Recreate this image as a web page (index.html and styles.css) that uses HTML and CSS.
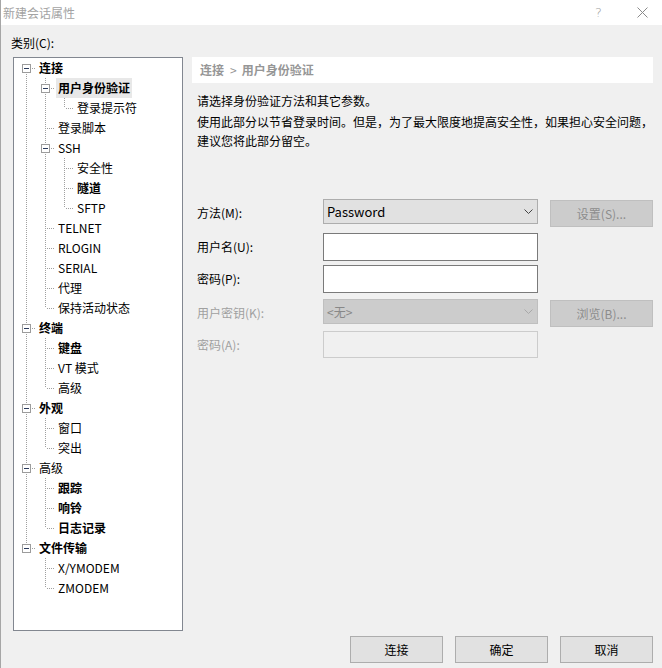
FILE: index.html
```html
<!DOCTYPE html>
<html lang="zh-CN">
<head>
<meta charset="utf-8">
<title>新建会话属性</title>
<link rel="stylesheet" href="styles.css">
</head>
<body>
<div class="window">
  <div class="titlebar">
    <span class="title">新建会话属性</span>
    <div class="caption">
      <span class="help">?</span>
      <svg class="close" width="11" height="11" viewBox="0 0 11 11"><path d="M0.5 0.5L10.5 10.5M10.5 0.5L0.5 10.5" stroke="#8a8a8a" stroke-width="1" fill="none"/></svg>
    </div>
  </div>
  <div class="main">
    <div class="cat-label">类别(C):</div>
    <div class="panes">
      <div class="tree">
        <div class="row"><i class="c bx first"><b class="box"></b></i><span class="lbl b">连接</span></div>
        <div class="row"><i class="c v"></i><i class="c bx mid"><b class="box"></b></i><span class="lbl b sel">用户身份验证</span></div>
        <div class="row"><i class="c v"></i><i class="c v"></i><i class="c l"></i><span class="lbl">登录提示符</span></div>
        <div class="row"><i class="c v"></i><i class="c t"></i><span class="lbl">登录脚本</span></div>
        <div class="row"><i class="c v"></i><i class="c bx mid"><b class="box"></b></i><span class="lbl">SSH</span></div>
        <div class="row"><i class="c v"></i><i class="c v"></i><i class="c t"></i><span class="lbl">安全性</span></div>
        <div class="row"><i class="c v"></i><i class="c v"></i><i class="c t"></i><span class="lbl b">隧道</span></div>
        <div class="row"><i class="c v"></i><i class="c v"></i><i class="c l"></i><span class="lbl">SFTP</span></div>
        <div class="row"><i class="c v"></i><i class="c t"></i><span class="lbl">TELNET</span></div>
        <div class="row"><i class="c v"></i><i class="c t"></i><span class="lbl">RLOGIN</span></div>
        <div class="row"><i class="c v"></i><i class="c t"></i><span class="lbl">SERIAL</span></div>
        <div class="row"><i class="c v"></i><i class="c t"></i><span class="lbl">代理</span></div>
        <div class="row"><i class="c v"></i><i class="c l"></i><span class="lbl">保持活动状态</span></div>
        <div class="row"><i class="c bx mid"><b class="box"></b></i><span class="lbl b">终端</span></div>
        <div class="row"><i class="c v"></i><i class="c t"></i><span class="lbl b">键盘</span></div>
        <div class="row"><i class="c v"></i><i class="c t"></i><span class="lbl">VT 模式</span></div>
        <div class="row"><i class="c v"></i><i class="c l"></i><span class="lbl">高级</span></div>
        <div class="row"><i class="c bx mid"><b class="box"></b></i><span class="lbl b">外观</span></div>
        <div class="row"><i class="c v"></i><i class="c t"></i><span class="lbl">窗口</span></div>
        <div class="row"><i class="c v"></i><i class="c l"></i><span class="lbl">突出</span></div>
        <div class="row"><i class="c bx mid"><b class="box"></b></i><span class="lbl">高级</span></div>
        <div class="row"><i class="c v"></i><i class="c t"></i><span class="lbl b">跟踪</span></div>
        <div class="row"><i class="c v"></i><i class="c t"></i><span class="lbl b">响铃</span></div>
        <div class="row"><i class="c v"></i><i class="c l"></i><span class="lbl b">日志记录</span></div>
        <div class="row"><i class="c bx last"><b class="box"></b></i><span class="lbl b">文件传输</span></div>
        <div class="row"><i class="c"></i><i class="c t"></i><span class="lbl">X/YMODEM</span></div>
        <div class="row"><i class="c"></i><i class="c l"></i><span class="lbl">ZMODEM</span></div>
      </div>
      <div class="content">
        <div class="crumb">连接<span class="sep">&gt;</span>用户身份验证</div>
        <p class="desc first">请选择身份验证方法和其它参数。</p>
        <p class="desc">使用此部分以节省登录时间。但是，为了最大限度地提高安全性，如果担心安全问题，<br>建议您将此部分留空。</p>
        <div class="form">
          <label class="flabel">方法(M):</label>
          <div class="select"><span>Password</span><svg class="chev" width="9" height="5" viewBox="0 0 9 5"><path d="M0.5 0.5L4.5 4.5L8.5 0.5" stroke="#444" fill="none"/></svg></div>
          <div class="btn dis side">设置(S)...</div>

          <label class="flabel">用户名(U):</label>
          <div class="input"></div>
          <div></div>

          <label class="flabel">密码(P):</label>
          <div class="input"></div>
          <div></div>

          <label class="flabel dis-text">用户密钥(K):</label>
          <div class="select dis"><span>&lt;无&gt;</span><svg class="chev" width="9" height="5" viewBox="0 0 9 5"><path d="M0.5 0.5L4.5 4.5L8.5 0.5" stroke="#a8a8a8" fill="none"/></svg></div>
          <div class="btn dis side">浏览(B)...</div>

          <label class="flabel dis-text">密码(A):</label>
          <div class="input dis short"></div>
          <div></div>
        </div>
      </div>
    </div>
    <div class="footer">
      <div class="btn">连接</div>
      <div class="btn">确定</div>
      <div class="btn">取消</div>
    </div>
  </div>
</div>
</body>
</html>
```

FILE: styles.css
```css
* { box-sizing: border-box; }
html, body { margin: 0; padding: 0; }
body {
  width: 662px;
  height: 668px;
  overflow: hidden;
  background: #f0f0f0;
  font-family: "Noto Sans CJK SC", "Noto Sans", sans-serif;
  font-size: 12px;
  color: #000;
}
.window {
  height: 668px;
  border-left: 1px solid #a6a6a6;
  background: #f0f0f0;
}
.titlebar {
  height: 25px;
  background: #fff;
  display: flex;
  align-items: center;
}
.title {
  padding-left: 2px;
  color: #a3a3a3;
  line-height: 25px;
}
.caption {
  margin-left: auto;
  display: flex;
  align-items: center;
  gap: 35px;
  padding-right: 14px;
}
.help {
  color: #a0a0a0;
  font-family: "DejaVu Sans", sans-serif;
  font-size: 13px;
  font-weight: 300;
  line-height: 25px;
}
.close { display: block; }

.main { padding: 0 9px 0 12px; }
.cat-label {
  padding-top: 8px;
  line-height: 20px;
  margin-left: -2px;
  margin-bottom: 4px;
}
.panes { display: flex; gap: 9px; }

.tree {
  width: 170px;
  height: 574px;
  flex: none;
  background: #fff;
  border: 1px solid #828790;
  padding: 0 0 0 3px;
}
.row { display: flex; height: 20px; align-items: center; }
.c { position: relative; display: block; width: 19px; height: 20px; flex: none; }
.c::before, .c::after { content: ""; position: absolute; }
.v::before, .t::before, .l::before, .bx::before {
  left: 9px; top: 0; width: 1px; height: 20px;
  background: linear-gradient(#a0a0a0 50%, transparent 50%) 0 0 / 1px 2px;
}
.l::before, .bx.last::before { height: 10px; }
.bx.first::before { top: 10px; height: 10px; }
.t::after, .l::after {
  left: 11px; top: 10px; width: 8px; height: 1px;
  background: linear-gradient(to right, #a0a0a0 50%, transparent 50%) 0 0 / 2px 1px;
}
.bx::after {
  left: 15px; top: 10px; width: 4px; height: 1px;
  background: linear-gradient(to right, #a0a0a0 50%, transparent 50%) 0 0 / 2px 1px;
}
.box {
  position: absolute;
  left: 5px; top: 6px;
  width: 9px; height: 9px;
  border: 1px solid #9c9c9c;
  background: #fff;
  z-index: 1;
}
.box::before {
  content: "";
  position: absolute;
  left: 1px; top: 3px;
  width: 5px; height: 1px;
  background: #2b3a5c;
}
.lbl {
  margin-left: 1px;
  padding: 0 2px;
  line-height: 20px;
  height: 20px;
  white-space: nowrap;
}
.lbl.b { font-weight: 700; }
.lbl.sel { background: #e8e8e8; }

.content { width: 461px; flex: none; }
.crumb {
  height: 26px;
  line-height: 26px;
  background: #fff;
  padding-left: 8px;
  color: #969696;
  font-weight: 700;
}
.sep { margin: 0 5px 0 6px; font-weight: 400; }
.desc {
  margin: 0;
  padding-left: 5px;
  line-height: 19px;
  white-space: nowrap;
}
.desc.first { margin-top: 8px; margin-bottom: 2px; }

.form {
  margin-top: 49px;
  padding-left: 5px;
  display: grid;
  grid-template-columns: 114px 215px 103px;
  column-gap: 12px;
  grid-template-rows: 34px 32px 34px 32px 28px;
  align-items: start;
}
.flabel { line-height: 28px; white-space: nowrap; }
.dis-text { color: #a0a0a0; }
.select {
  height: 25px;
  background: #e1e1e1;
  border: 1px solid #adadad;
  display: flex;
  align-items: center;
  padding: 0 4px 0 3px;
  justify-content: space-between;
  font-size: 13px;
}
.select.dis { background: #cccccc; border-color: #bfbfbf; color: #888; font-size: 12px; }
.chev { display: block; }
.input {
  height: 28px;
  background: #fff;
  border: 1px solid #7a7a7a;
}
.input.dis { background: #f0f0f0; border-color: #cccccc; }
.input.short { height: 27px; }

.btn {
  width: 93px;
  height: 27px;
  background: #e1e1e1;
  border: 1px solid #adadad;
  display: flex;
  align-items: center;
  justify-content: center;
}
.btn.dis { background: #cccccc; border-color: #bfbfbf; color: #8c8c8c; }
.btn.side { width: 103px; margin-top: 1px; }

.footer {
  display: flex;
  justify-content: flex-end;
  gap: 12px;
  margin-top: 5px;
}
```
